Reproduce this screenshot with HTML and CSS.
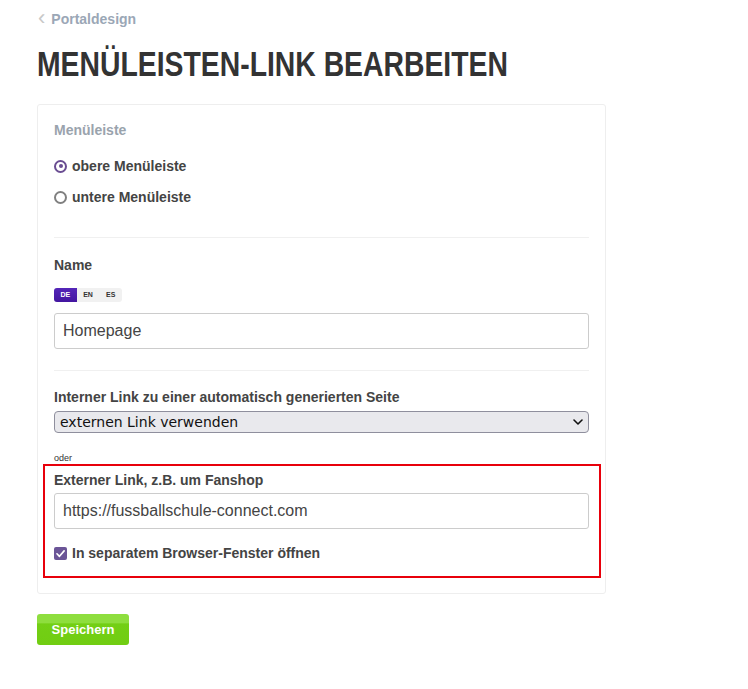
FILE: index.html
```html
<!DOCTYPE html>
<html lang="de">
<head>
<meta charset="utf-8">
<title>Menüleisten-Link bearbeiten</title>
<link rel="stylesheet" href="styles.css">
</head>
<body>
<div class="page">
  <a class="crumb" href="#"><span class="crumb-chev">‹</span>Portaldesign</a>
  <h1 class="title"><span class="title-text">MENÜLEISTEN-LINK BEARBEITEN</span></h1>
  <form class="card">
    <div class="section-label">Menüleiste</div>
    <label class="radio-row first"><span class="radio checked"></span>obere Menüleiste</label>
    <label class="radio-row"><span class="radio"></span>untere Menüleiste</label>
    <div class="sep sep-1"></div>
    <div class="field-label name-label">Name</div>
    <div class="langs"><span class="lang active">DE</span><span class="lang">EN</span><span class="lang">ES</span></div>
    <input class="text-input name-input" type="text" value="Homepage">
    <div class="sep sep-2"></div>
    <div class="field-label int-label">Interner Link zu einer automatisch generierten Seite</div>
    <div class="select-wrap">
      <select class="select"><option>externen Link verwenden</option></select>
      <svg class="select-chev" viewBox="0 0 10 6" width="10" height="6"><path d="M1 1 L5 5 L9 1" fill="none" stroke="#111" stroke-width="1.6" stroke-linecap="round" stroke-linejoin="round"/></svg>
    </div>
    <div class="oder">oder</div>
    <div class="highlight">
      <div class="field-label">Externer Link, z.B. um Fanshop</div>
      <input class="text-input ext-input" type="text" value="https://fussballschule-connect.com">
      <label class="check-row"><span class="checkbox"><svg viewBox="0 0 14 14" width="14" height="14"><path d="M3.2 7.3 L5.9 10 L10.9 4.2" fill="none" stroke="#fff" stroke-width="1.8" stroke-linecap="round" stroke-linejoin="round"/></svg></span>In separatem Browser-Fenster öffnen</label>
    </div>
  </form>
  <button class="save" type="button">Speichern</button>
</div>
</body>
</html>
```
FILE: styles.css
```css
* { box-sizing: border-box; }
html, body { margin: 0; padding: 0; background: #fff; }
body { font-family: "Liberation Sans", Arial, sans-serif; color: #444; }
.page { padding: 10px 0 0 37px; width: 606px; }
.crumb { display: flex; align-items: center; height: 17px; font-size: 14px; font-weight: bold; color: #9ba7b6; text-decoration: none; }
.crumb-chev { color: #c8c8c8; font-size: 22px; font-weight: normal; margin: -3px 6px 0 1px; line-height: 17px; }
.title { margin: 0; padding-top: 19px; height: 61px; font-family: "Liberation Sans", Arial, sans-serif; font-weight: bold; font-size: 35px; line-height: 36px; color: #333; white-space: nowrap; }
.title-text { display: inline-block; transform: scaleX(0.81); transform-origin: 0 50%; }
.card { display: block; margin-top: 16px; border: 1px solid #eeeeee; border-radius: 3px; padding: 17px 16px 15px 16px; width: 569px; }
.section-label { font-size: 14px; line-height: 16px; font-weight: bold; color: #9aa3ad; }
.radio-row { display: flex; align-items: center; height: 20px; font-size: 14px; font-weight: bold; color: #444; margin-top: 11px; }
.radio-row.first { margin-top: 18px; }
.radio { width: 13px; height: 13px; border: 2px solid #808080; border-radius: 50%; margin-right: 5px; position: relative; }
.radio.checked { border-color: #6a4d92; }
.radio.checked::after { content: ""; position: absolute; left: 2.5px; top: 2.5px; width: 4px; height: 4px; border-radius: 50%; background: #6a4d92; }
.sep { height: 1px; background: #f0f0f0; }
.sep-1 { margin-top: 30px; }
.sep-2 { margin-top: 21px; }
.field-label { font-size: 14px; line-height: 16px; font-weight: bold; color: #444; }
.name-label { margin-top: 19px; }
.langs { display: flex; width: 68px; margin-top: 15px; height: 14px; background: #f1f1f1; border-radius: 3px; overflow: hidden; }
.lang { width: 23px; font-size: 7px; line-height: 14px; font-weight: bold; text-align: center; color: #333; }
.lang.active { background: linear-gradient(#5426b8, #4316a0); color: #fff; }
.text-input { display: block; width: 100%; height: 36px; margin-top: 11px; border: 1px solid #ccc; border-radius: 3px; padding: 0 8px; font-family: "Liberation Sans", Arial, sans-serif; font-size: 16px; color: #444; background: #fff; outline: none; }
.int-label { margin-top: 18px; }
.select-wrap { position: relative; margin-top: 6px; }
.select { display: block; width: 100%; height: 22px; -webkit-appearance: none; appearance: none; background: #e9e9ed; border: 1px solid #8f8f9d; border-radius: 4px; font-family: "DejaVu Sans", sans-serif; font-size: 14px; color: #111; padding: 0 5px; }
.select-chev { position: absolute; right: 6px; top: 8px; pointer-events: none; }
.oder { margin-top: 19px; font-size: 9px; line-height: 12px; color: #333; }
.highlight { border: 2px solid #e8000b; margin: 0 -12px 0 -11px; padding: 6px 10px 13px 9px; }
.ext-input { margin-top: 5px; }
.check-row { display: flex; align-items: center; height: 20px; margin-top: 14px; font-size: 14px; font-weight: bold; color: #444; }
.checkbox { width: 13px; height: 13px; background: #6b5597; border-radius: 2px; margin-right: 5px; display: flex; align-items: center; justify-content: center; }
.checkbox svg { width: 13px; height: 13px; }
.save { display: block; margin-top: 20px; width: 92px; height: 31px; border: none; border-radius: 3px; background: linear-gradient(#8ede3e 0, #8ede3e 30%, #73cf15 31%, #71cd12 100%); color: #fff; font-family: "Liberation Sans", Arial, sans-serif; font-weight: bold; font-size: 13px; padding: 0; }
```
